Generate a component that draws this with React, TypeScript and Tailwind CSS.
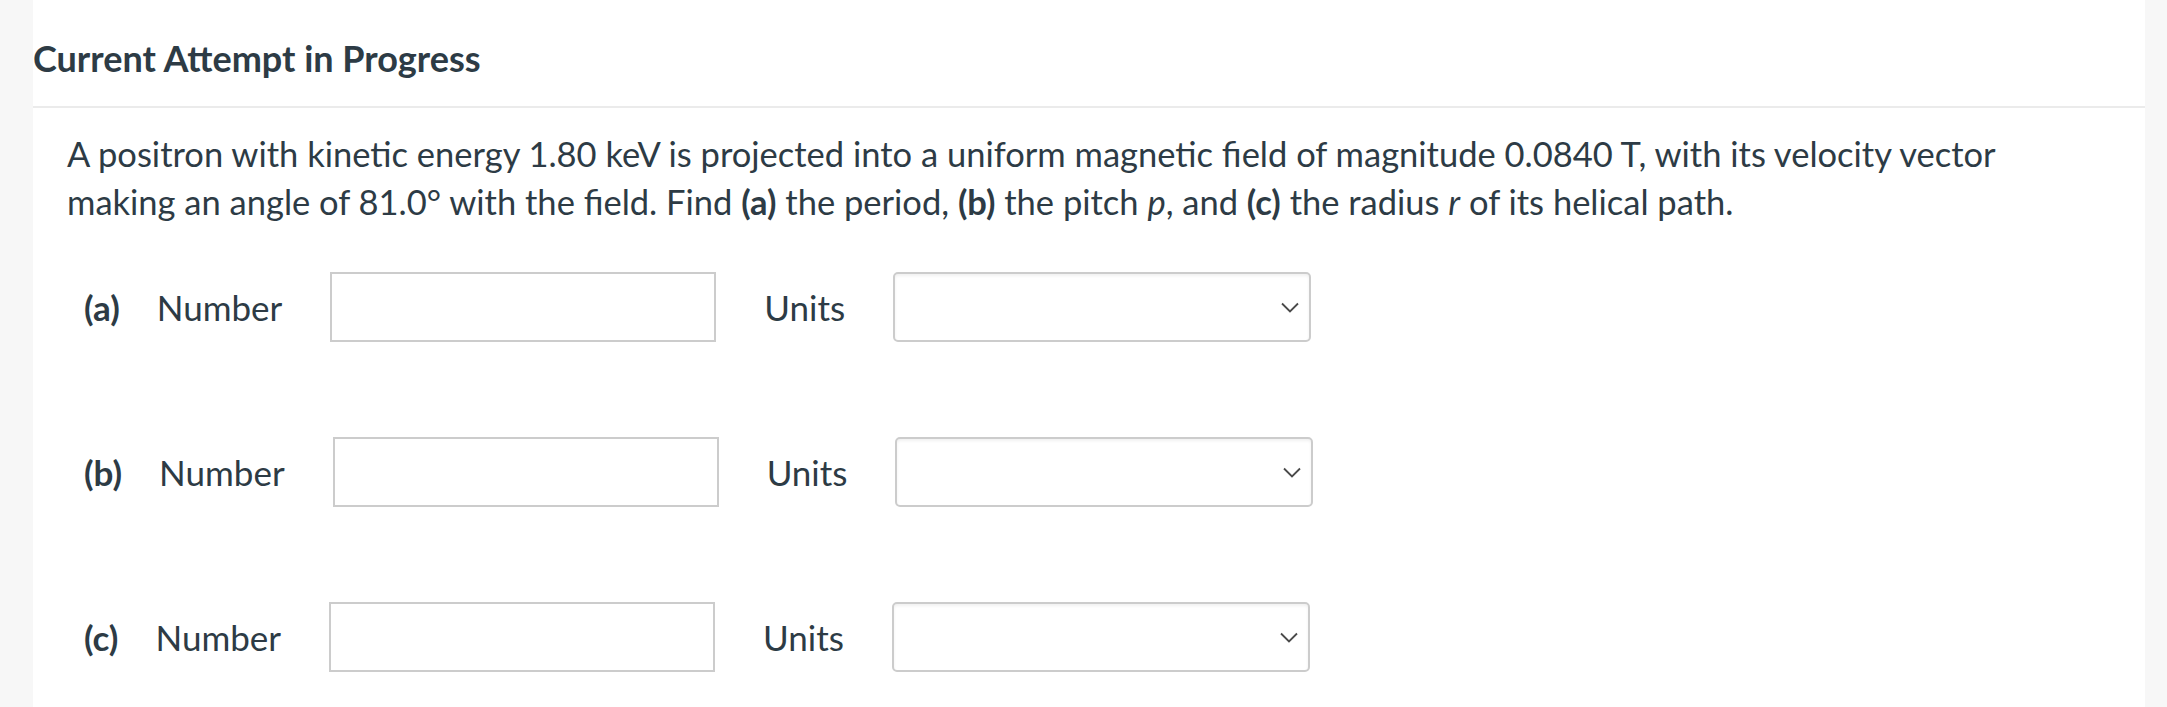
import React from 'react';

const parts = ['a', 'b', 'c'];

const Chevron = () => (
  <svg width="18" height="11" viewBox="0 0 18 11" fill="none" className="shrink-0">
    <path d="M1 1.5 L9 9.5 L17 1.5" stroke="#4a4a4a" strokeWidth="1.8" />
  </svg>
);

const AnswerRow = ({ part }: { part: string }) => (
  <div className="flex items-center h-[70px] pl-[51px] text-[35px]">
    <span className="font-bold">({part})</span>
    <span className="ml-[37px]">Number</span>
    <input
      type="text"
      className="ml-[48px] w-[386px] h-[70px] border-2 border-[#cccccc] bg-white outline-none"
    />
    <span className="ml-[48px]">Units</span>
    <div className="ml-[48px] w-[418px] h-[70px] border-2 border-[#cccccc] rounded-[5px] bg-white shadow-[inset_0_2px_3px_rgba(0,0,0,0.06)] flex items-center justify-end pr-[10px]">
      <Chevron />
    </div>
  </div>
);

export default function App() {
  return (
    <div className="flex min-h-[707px] bg-white text-[#2d3b45] font-['Lato',sans-serif] text-[34.5px] leading-[48px]">
      <div className="w-[33px] shrink-0 bg-[#f7f7f7]" />
      <main className="flex-1 bg-white">
        <h2 className="font-bold text-[36px] pt-[34px] pb-[24px] border-b-2 border-[#ebebeb]">
          Current Attempt in Progress
        </h2>
        <p className="px-[34px] pt-[22px]">
          A positron with kinetic energy 1.80 keV is projected into a uniform magnetic field of
          magnitude 0.0840 T, with its velocity vector making an angle of 81.0° with the field. Find{' '}
          <b>(a)</b> the period, <b>(b)</b> the pitch <i>p</i>, and <b>(c)</b> the radius{' '}
          <i>r</i> of its helical path.
        </p>
        <div className="mt-[46px] flex flex-col gap-[95px]">
          {parts.map((p) => (
            <AnswerRow key={p} part={p} />
          ))}
        </div>
      </main>
      <div className="w-[22px] shrink-0 bg-[#f7f7f7]" />
    </div>
  );
}
